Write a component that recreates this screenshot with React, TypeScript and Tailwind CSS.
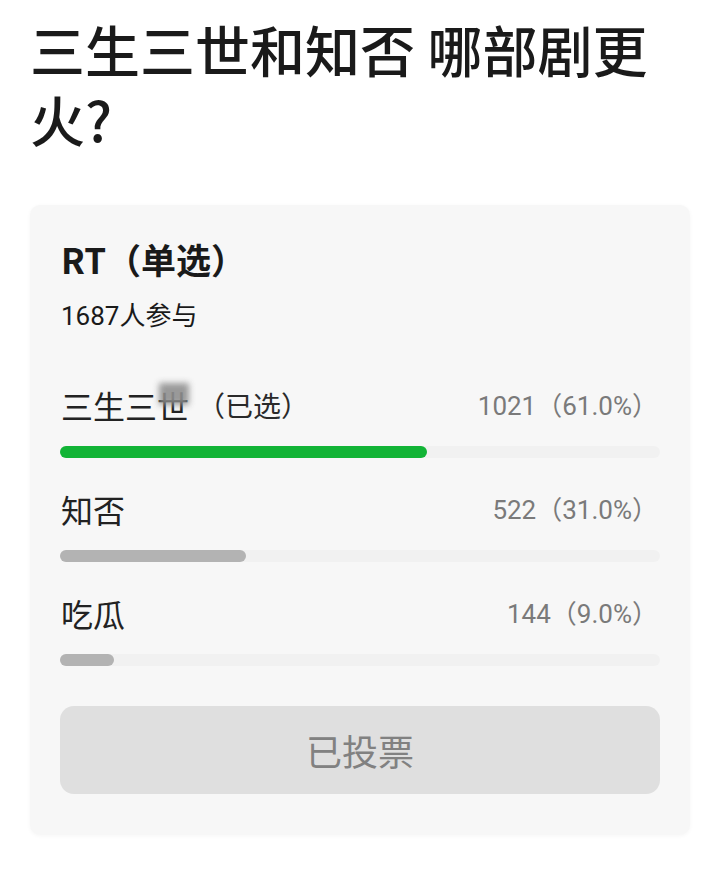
import React from "react";

const cjk = '"Noto Sans CJK SC", "Noto Sans", sans-serif';
const num = 'Roboto, "Noto Sans CJK SC", sans-serif';

function Option({ label, count, pct, width, color, blurLast }: { label: string; count: string; pct: string; width: number; color: string; blurLast?: boolean }) {
  return (
    <div>
      <div className="flex items-center justify-between h-[40px]">
        <div className="text-[32px] leading-[40px] text-[#222] pl-[1px] flex items-center" style={{ fontFamily: cjk }}>
          {blurLast ? (
            <>
              三生三<span className="relative inline-block">世<span className="absolute left-[2px] right-[0px] top-[-2px] h-[22px] bg-[#8f8f8f] blur-[3px] opacity-90"></span></span>
              <span className="text-[28px] ml-[8px] text-[#2a2a2a]">（已选）</span>
            </>
          ) : (
            label
          )}
        </div>
        <div className="text-[26px] text-[#7a7a7a] pr-[2px]" style={{ fontFamily: num }}>
          {count}
          <span style={{ fontFamily: cjk }}>（</span>
          {pct}
          <span style={{ fontFamily: cjk }}>）</span>
        </div>
      </div>
      <div className="mt-[21px] h-[12px] w-full rounded-full bg-[#f1f1f1]">
        <div className="h-full rounded-full" style={{ width: `${width}%`, backgroundColor: color }}></div>
      </div>
    </div>
  );
}

export default function App() {
  return (
    <div className="w-[720px] h-[874px] bg-white" style={{ fontFamily: cjk }}>
      <h1 className="pt-[13px] pl-[30px] text-[55px] font-medium text-[#1a1a1a]">
        <div className="h-[70px] leading-[70px]">三生三世和知否 哪部剧更</div>
        <div className="h-[70px] leading-[70px]">火?</div>
      </h1>
      <div className="mx-[30px] mt-[52px] bg-[#f7f7f7] rounded-[10px] pt-[34px] px-[30px] pb-[41px] shadow-[0_1px_4px_rgba(0,0,0,0.04)]">
        <div className="text-[35px] leading-[40px] font-bold text-[#1a1a1a] pl-[1px]">RT（单选）</div>
        <div className="mt-[20px] text-[26px] leading-[30px] text-[#1a1a1a] pl-[1px]">
          <span style={{ fontFamily: num }}>1687</span>人参与
        </div>
        <div className="mt-[54px] flex flex-col gap-[31px]">
          <Option label="三生三世（已选）" count="1021" pct="61.0%" width={61.2} color="#12b436" blurLast />
          <Option label="知否" count="522" pct="31.0%" width={31} color="#b3b3b3" />
          <Option label="吃瓜" count="144" pct="9.0%" width={9} color="#b3b3b3" />
        </div>
        <div className="mt-[40px] h-[88px] rounded-[14px] bg-[#dfdfdf] flex items-center justify-center text-[36px] text-[#818181]">
          已投票
        </div>
      </div>
    </div>
  );
}
